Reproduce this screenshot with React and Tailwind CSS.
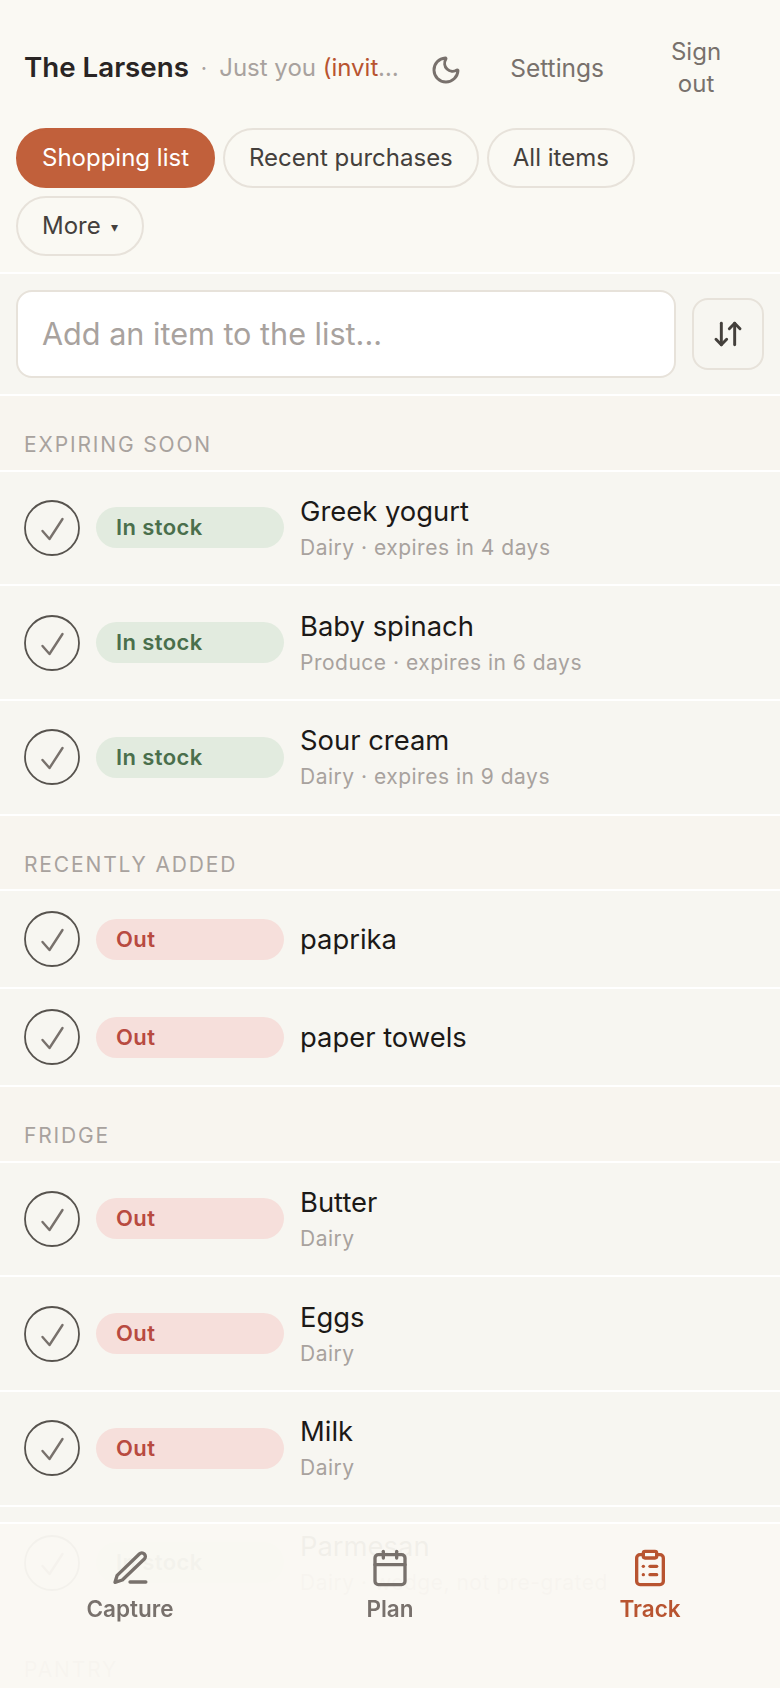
import { Moon, ArrowDownUp, Calendar, ClipboardList } from 'lucide-react'

const sections = [
  {
    title: 'EXPIRING SOON',
    items: [
      { name: 'Greek yogurt', sub: 'Dairy · expires in 4 days', status: 'in' },
      { name: 'Baby spinach', sub: 'Produce · expires in 6 days', status: 'in' },
      { name: 'Sour cream', sub: 'Dairy · expires in 9 days', status: 'in' },
    ],
  },
  {
    title: 'RECENTLY ADDED',
    items: [
      { name: 'paprika', status: 'out' },
      { name: 'paper towels', status: 'out' },
    ],
  },
  {
    title: 'FRIDGE',
    items: [
      { name: 'Butter', sub: 'Dairy', status: 'out' },
      { name: 'Eggs', sub: 'Dairy', status: 'out' },
      { name: 'Milk', sub: 'Dairy', status: 'out' },
      { name: 'Parmesan', sub: 'Dairy · wedge, not pre-grated', status: 'in' },
    ],
  },
  { title: 'PANTRY', items: [] },
]

function Check() {
  return (
    <svg width="56" height="56" viewBox="0 0 56 56" fill="none" className="shrink-0">
      <circle cx="28" cy="28" r="27" stroke="#57534e" strokeWidth="1.8" />
      <path d="M18.5 31l7 8L38.5 19" stroke="#78716c" strokeWidth="2.4" strokeLinecap="round" strokeLinejoin="round" />
    </svg>
  )
}

function Pen({ size, strokeWidth }) {
  return (
    <svg width={size} height={size} viewBox="0 0 24 24" fill="none" stroke="currentColor" strokeWidth={strokeWidth} strokeLinecap="round" strokeLinejoin="round">
      <path d="M17.6 3.6a2.1 2.1 0 0 1 3 3L7.4 19.2 3 20.6l1.3-4.2z" />
      <path d="M12 20.4h9.5" />
    </svg>
  )
}

function Row({ item }) {
  const inStock = item.status === 'in'
  return (
    <div className={`flex items-center gap-4 px-6 border-b-2 border-white ${item.sub ? 'h-[114.7px]' : 'h-[98px]'}`}>
      <Check />
      <span className={`w-[188px] h-[41px] shrink-0 rounded-full flex items-center px-5 text-[22px] tracking-[0.4px] font-semibold ${inStock ? 'bg-[#e2ebdf] text-[#4a6f4c]' : 'bg-[#f6dfdb] text-[#b84a40]'}`}>
        {inStock ? 'In stock' : 'Out'}
      </span>
      <div className="min-w-0">
        <div className="text-[27.4px] leading-[36px] text-[#1c1917]">{item.name}</div>
        {item.sub && <div className="text-[21px] leading-[30px] mt-1 tracking-[0.5px] text-[#a8a29e]">{item.sub}</div>}
      </div>
    </div>
  )
}

export default function App() {
  return (
    <div className="h-[1688px] relative overflow-hidden bg-[#f7f6f1] font-['Inter',sans-serif]">
      <header className="bg-[#faf9f3] border-b-2 border-white">
        <div className="flex items-center h-[128px] pt-2 pl-6 pr-4">
          <span className="text-[27.7px] font-semibold text-[#292524] whitespace-nowrap">The Larsens</span>
          <span className="mx-3 text-[22px] text-[#a8a29e]">·</span>
          <span className="w-[184px] shrink-0 truncate text-[24px] text-[#a8a29e]">Just you <span className="text-[#b85430]">(invite someone)</span></span>
          <Moon size={32} strokeWidth={2.2} className="ml-[27px] mt-1 text-[#78716c] shrink-0" />
          <span className="ml-[48px] text-[24.5px] text-[#78716c]">Settings</span>
          <span className="ml-[48px] w-[88px] text-center text-[24px] leading-[32px] text-[#78716c]">Sign out</span>
        </div>
        <div className="flex flex-wrap gap-2 px-4 pb-[16px]">
          <span className="h-[60px] px-6 rounded-full flex items-center border-2 border-[#c1603b] bg-[#c1603b] text-white text-[24px]">Shopping list</span>
          <span className="h-[60px] px-6 rounded-full flex items-center border-2 border-[#e7e2da] text-[#44403c] text-[24px]">Recent purchases</span>
          <span className="h-[60px] px-6 rounded-full flex items-center border-2 border-[#e7e2da] text-[#44403c] text-[24px]">All items</span>
          <span className="h-[60px] px-6 rounded-full flex items-center gap-[10px] border-2 border-[#e7e2da] text-[#44403c] text-[24px]">More <span className="text-[14px]">▾</span></span>
        </div>
      </header>
      <div className="flex items-center gap-4 h-[122px] px-4 border-b-2 border-white">
        <div className="flex-1 h-[88px] rounded-2xl bg-white border-2 border-[#e7e2da] flex items-center px-6 text-[30.6px] text-[#a8a29e]">Add an item to the list...</div>
        <div className="w-[72px] h-[72px] rounded-2xl border-2 border-[#e7e2da] flex items-center justify-center text-[#44403c]">
          <ArrowDownUp size={32} strokeWidth={2.2} />
        </div>
      </div>
      {sections.map(s => (
        <section key={s.title}>
          <div className="h-[75.5px] flex items-end pb-[9px] px-6 bg-[#f8f5ef] text-[21px] tracking-[1.85px] text-[#a8a29e] border-b-2 border-white">{s.title}</div>
          {s.items.map(item => <Row key={item.name} item={item} />)}
        </section>
      ))}
      <nav className="fixed bottom-0 inset-x-0 h-[166px] grid grid-cols-3 items-start pt-6 bg-[#faf8f3]/96 border-t-2 border-white">
        {[
          { label: 'Capture', Icon: Pen },
          { label: 'Plan', Icon: Calendar },
          { label: 'Track', Icon: ClipboardList, active: true },
        ].map(({ label, Icon, active }) => (
          <div key={label} className={`flex flex-col items-center gap-1 ${active ? 'text-[#b85430]' : 'text-[#78716c]'}`}>
            <Icon size={40} strokeWidth={2} />
            <span className="text-[22.5px] font-semibold">{label}</span>
          </div>
        ))}
      </nav>
    </div>
  )
}
